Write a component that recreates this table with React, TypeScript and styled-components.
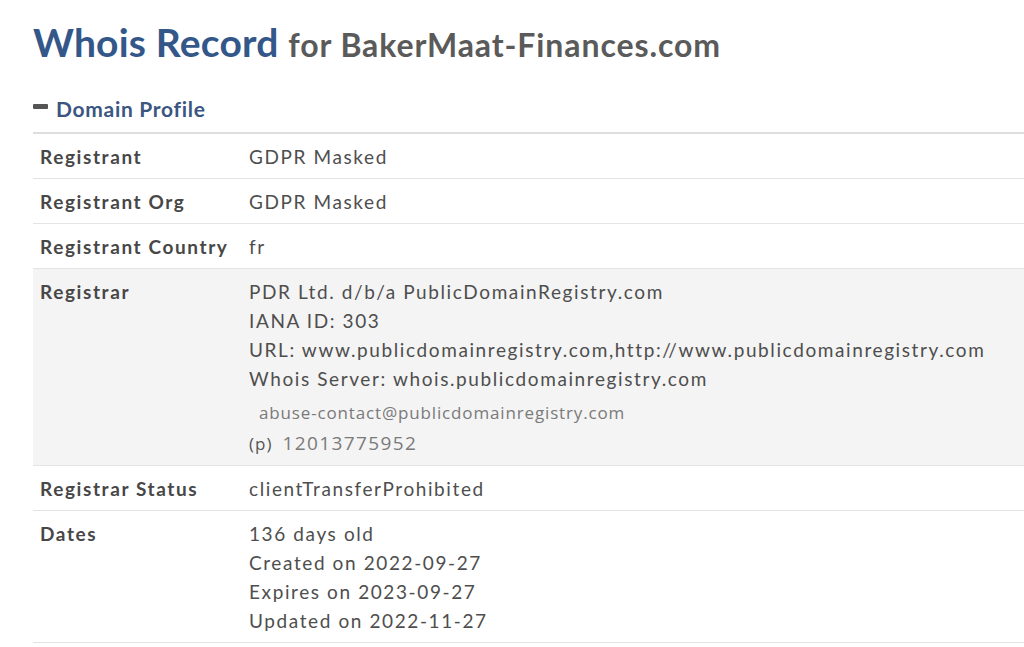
import React from "react";
import styled, { createGlobalStyle } from "styled-components";

const Global = createGlobalStyle`
  html, body { margin: 0; padding: 0; background: #fff; }
  body { font-family: Lato, "Open Sans", sans-serif; overflow: hidden; }
`;

const Page = styled.div`
  padding: 19px 0 0 33px;
  width: 100%;
  box-sizing: border-box;
  overflow: hidden;
`;

const Title = styled.h1`
  margin: 0;
  font-size: 39px;
  font-weight: 700;
  color: #34578a;
  line-height: 46px;
  letter-spacing: 0.2px;
  white-space: nowrap;
`;

const TitleSub = styled.small`
  font-size: 32px;
  color: #5a5a5a;
  letter-spacing: 0.9px;
`;

const SectionHead = styled.div`
  margin-top: 28px;
  display: flex;
  align-items: center;
  gap: 8px;
  font-size: 21px;
  line-height: 25px;
  font-weight: 700;
  color: #3b5680;
  padding-bottom: 11px;
  border-bottom: 2px solid #dedede;
  letter-spacing: 0.7px;
`;

const Minus = styled.span`
  display: inline-block;
  width: 15px;
  height: 5px;
  margin-bottom: 5px;
  border-radius: 1px;
  background: #555;
`;

const Table = styled.div`
  display: flex;
  flex-direction: column;
`;

const Row = styled.div<{ $shaded?: boolean }>`
  display: grid;
  grid-template-columns: 209px 1fr;
  padding: 8px 0 7px 7px;
  background: ${(p) => (p.$shaded ? "#f4f4f4" : "#fff")};
  border-bottom: 1px solid #e4e4e4;
  font-size: 19px;
  line-height: 29px;
  letter-spacing: 1.6px;
`;

const Label = styled.div`
  font-weight: 700;
  color: #474747;
  white-space: nowrap;
`;

const Value = styled.div`
  color: #4e4e4e;
  white-space: nowrap;
`;

const Line = styled.div``;

const Email = styled.div`
  font-family: "Open Sans", sans-serif;
  font-size: 17px;
  color: #7a7a7a;
  letter-spacing: 0.85px;
  line-height: 32px;
  padding: 4px 0 0 10px;
`;

const PhoneLine = styled.div`
  font-family: "Open Sans", sans-serif;
  line-height: 28px;
`;

const PLabel = styled.span`
  color: #555;
  font-size: 17px;
  letter-spacing: 1px;
  margin-right: 10px;
`;

const Phone = styled.span`
  font-size: 19px;
  color: #7a7a7a;
  letter-spacing: 1.4px;
`;

export default function App() {
  return (
    <Page>
      <Global />
      <Title>
        Whois Record <TitleSub>for BakerMaat-Finances.com</TitleSub>
      </Title>
      <SectionHead>
        <Minus />
        Domain Profile
      </SectionHead>
      <Table>
        <Row>
          <Label>Registrant</Label>
          <Value>GDPR Masked</Value>
        </Row>
        <Row>
          <Label>Registrant Org</Label>
          <Value>GDPR Masked</Value>
        </Row>
        <Row>
          <Label>Registrant Country</Label>
          <Value>fr</Value>
        </Row>
        <Row $shaded>
          <Label>Registrar</Label>
          <Value>
            <Line>PDR Ltd. d/b/a PublicDomainRegistry.com</Line>
            <Line>IANA ID: 303</Line>
            <Line>URL: www.publicdomainregistry.com,http://www.publicdomainregistry.com</Line>
            <Line>Whois Server: whois.publicdomainregistry.com</Line>
            <Email>abuse-contact@publicdomainregistry.com</Email>
            <PhoneLine>
              <PLabel>(p)</PLabel>
              <Phone>12013775952</Phone>
            </PhoneLine>
          </Value>
        </Row>
        <Row>
          <Label>Registrar Status</Label>
          <Value>clientTransferProhibited</Value>
        </Row>
        <Row>
          <Label>Dates</Label>
          <Value>
            <Line>136 days old</Line>
            <Line>Created on 2022-09-27</Line>
            <Line>Expires on 2023-09-27</Line>
            <Line>Updated on 2022-11-27</Line>
          </Value>
        </Row>
      </Table>
    </Page>
  );
}
